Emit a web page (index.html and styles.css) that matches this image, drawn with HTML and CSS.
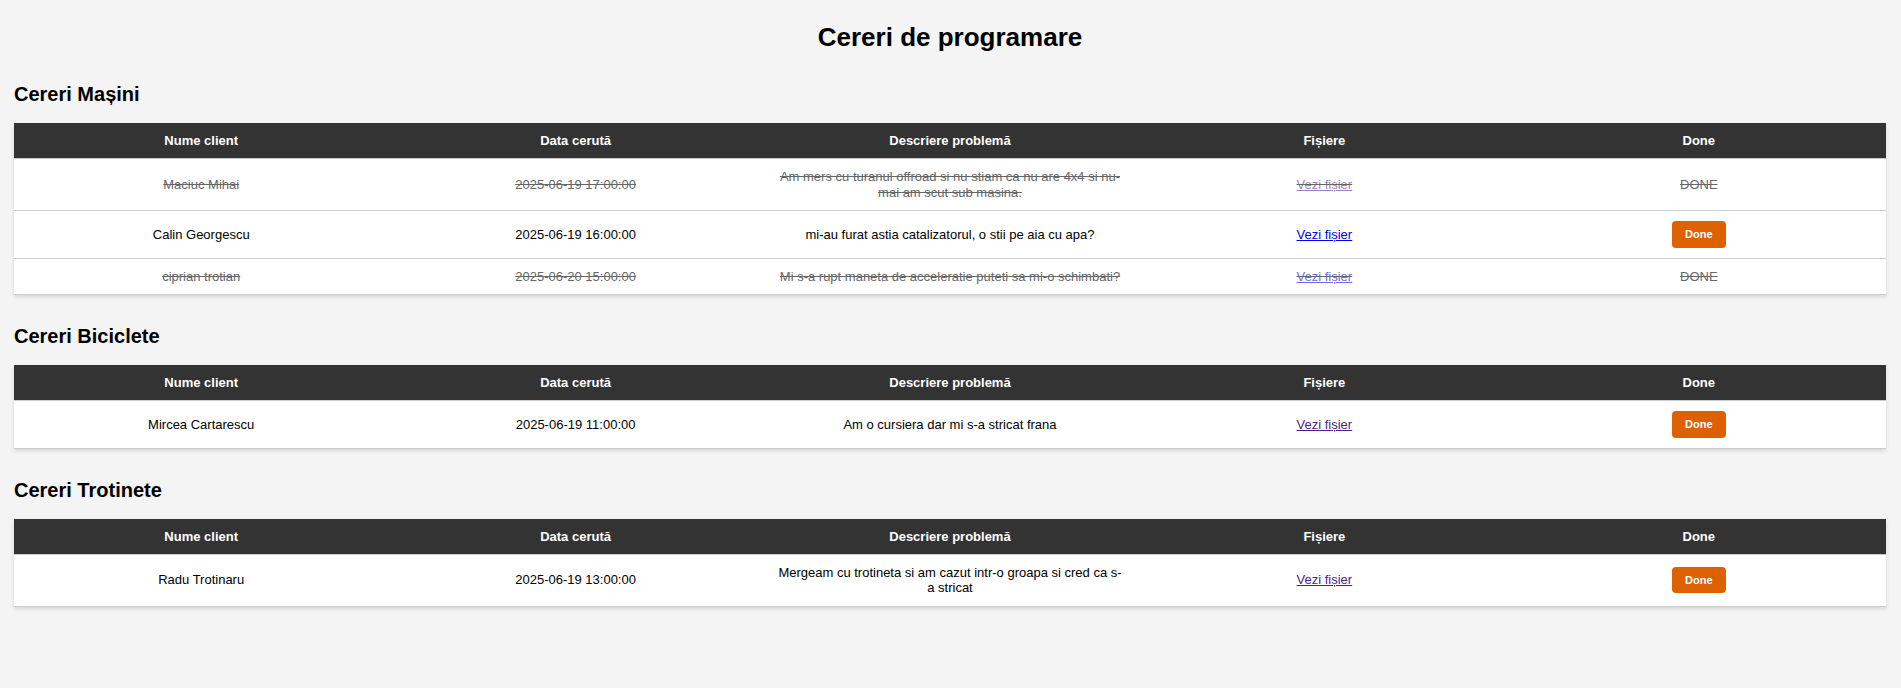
FILE: index.html
```html
<!DOCTYPE html>
<html lang="ro">
<head>
<meta charset="utf-8">
<title>Cereri de programare</title>
<link rel="stylesheet" href="styles.css">
</head>
<body>
<main class="page">
  <h1 class="title">Cereri de programare</h1>

  <section class="group">
    <h2 class="group-title">Cereri Mașini</h2>
    <table class="req-table">
      <thead>
        <tr><th>Nume client</th><th>Data cerută</th><th>Descriere problemă</th><th>Fișiere</th><th>Done</th></tr>
      </thead>
      <tbody>
        <tr class="row-done">
          <td>Maciuc Mihai</td>
          <td>2025-06-19 17:00:00</td>
          <td>Am mers cu turanul offroad si nu stiam ca nu are 4x4 si nu-mai am scut sub masina.</td>
          <td><a class="file-link visited" href="#">Vezi fișier</a></td>
          <td>DONE</td>
        </tr>
        <tr>
          <td>Calin Georgescu</td>
          <td>2025-06-19 16:00:00</td>
          <td>mi-au furat astia catalizatorul, o stii pe aia cu apa?</td>
          <td><a class="file-link" href="#">Vezi fișier</a></td>
          <td><button class="done-btn" type="button">Done</button></td>
        </tr>
        <tr class="row-done">
          <td>ciprian trotian</td>
          <td>2025-06-20 15:00:00</td>
          <td>Mi s-a rupt maneta de acceleratie puteti sa mi-o schimbati?</td>
          <td><a class="file-link" href="#">Vezi fișier</a></td>
          <td>DONE</td>
        </tr>
      </tbody>
    </table>
  </section>

  <section class="group">
    <h2 class="group-title">Cereri Biciclete</h2>
    <table class="req-table">
      <thead>
        <tr><th>Nume client</th><th>Data cerută</th><th>Descriere problemă</th><th>Fișiere</th><th>Done</th></tr>
      </thead>
      <tbody>
        <tr>
          <td>Mircea Cartarescu</td>
          <td>2025-06-19 11:00:00</td>
          <td>Am o cursiera dar mi s-a stricat frana</td>
          <td><a class="file-link visited" href="#">Vezi fișier</a></td>
          <td><button class="done-btn" type="button">Done</button></td>
        </tr>
      </tbody>
    </table>
  </section>

  <section class="group">
    <h2 class="group-title">Cereri Trotinete</h2>
    <table class="req-table">
      <thead>
        <tr><th>Nume client</th><th>Data cerută</th><th>Descriere problemă</th><th>Fișiere</th><th>Done</th></tr>
      </thead>
      <tbody>
        <tr>
          <td>Radu Trotinaru</td>
          <td>2025-06-19 13:00:00</td>
          <td>Mergeam cu trotineta si am cazut intr-o groapa si cred ca s-a stricat</td>
          <td><a class="file-link visited" href="#">Vezi fișier</a></td>
          <td><button class="done-btn" type="button">Done</button></td>
        </tr>
      </tbody>
    </table>
  </section>
</main>
</body>
</html>
```

FILE: styles.css
```css
html, body {
  margin: 0;
  padding: 0;
}

body {
  background: #f4f4f4;
  font-family: "Liberation Sans", Arial, sans-serif;
  color: #000;
}

.page {
  padding: 22px 15px 40px 14px;
}

.title {
  margin: 0 0 31px;
  font-size: 26px;
  line-height: 30px;
  font-weight: bold;
  text-align: center;
}

.group {
  margin-bottom: 30px;
}

.group-title {
  margin: 0 0 17px;
  font-size: 20px;
  line-height: 23px;
  font-weight: bold;
}

.req-table {
  width: 100%;
  table-layout: fixed;
  border-collapse: collapse;
  background: #fff;
  box-shadow: 0 2px 4px rgba(0, 0, 0, 0.12);
}

.req-table th {
  background: #333;
  color: #fff;
  font-size: 13px;
  font-weight: bold;
  line-height: normal;
  padding: 10px 15px;
  text-align: center;
  border-bottom: 1px solid #ccc;
}

.req-table td {
  font-size: 13px;
  line-height: 15.5px;
  padding: 10px 15px;
  text-align: center;
  border-bottom: 1px solid #ccc;
  vertical-align: middle;
}

.row-done td {
  color: #666;
  text-decoration: line-through;
}

.file-link {
  color: #0000ee;
  text-decoration: underline;
}

.file-link.visited {
  color: #551a8b;
}

.row-done .file-link {
  color: #6b6bf3;
}

.row-done .file-link.visited {
  color: #9b7fc2;
}

.done-btn {
  display: inline-block;
  vertical-align: middle;
  background: #dd6100;
  color: #fff;
  border: none;
  border-radius: 4px;
  padding: 7px 13px;
  font-family: "Liberation Sans", Arial, sans-serif;
  font-size: 11px;
  line-height: 12.5px;
  font-weight: bold;
  cursor: pointer;
}
```
